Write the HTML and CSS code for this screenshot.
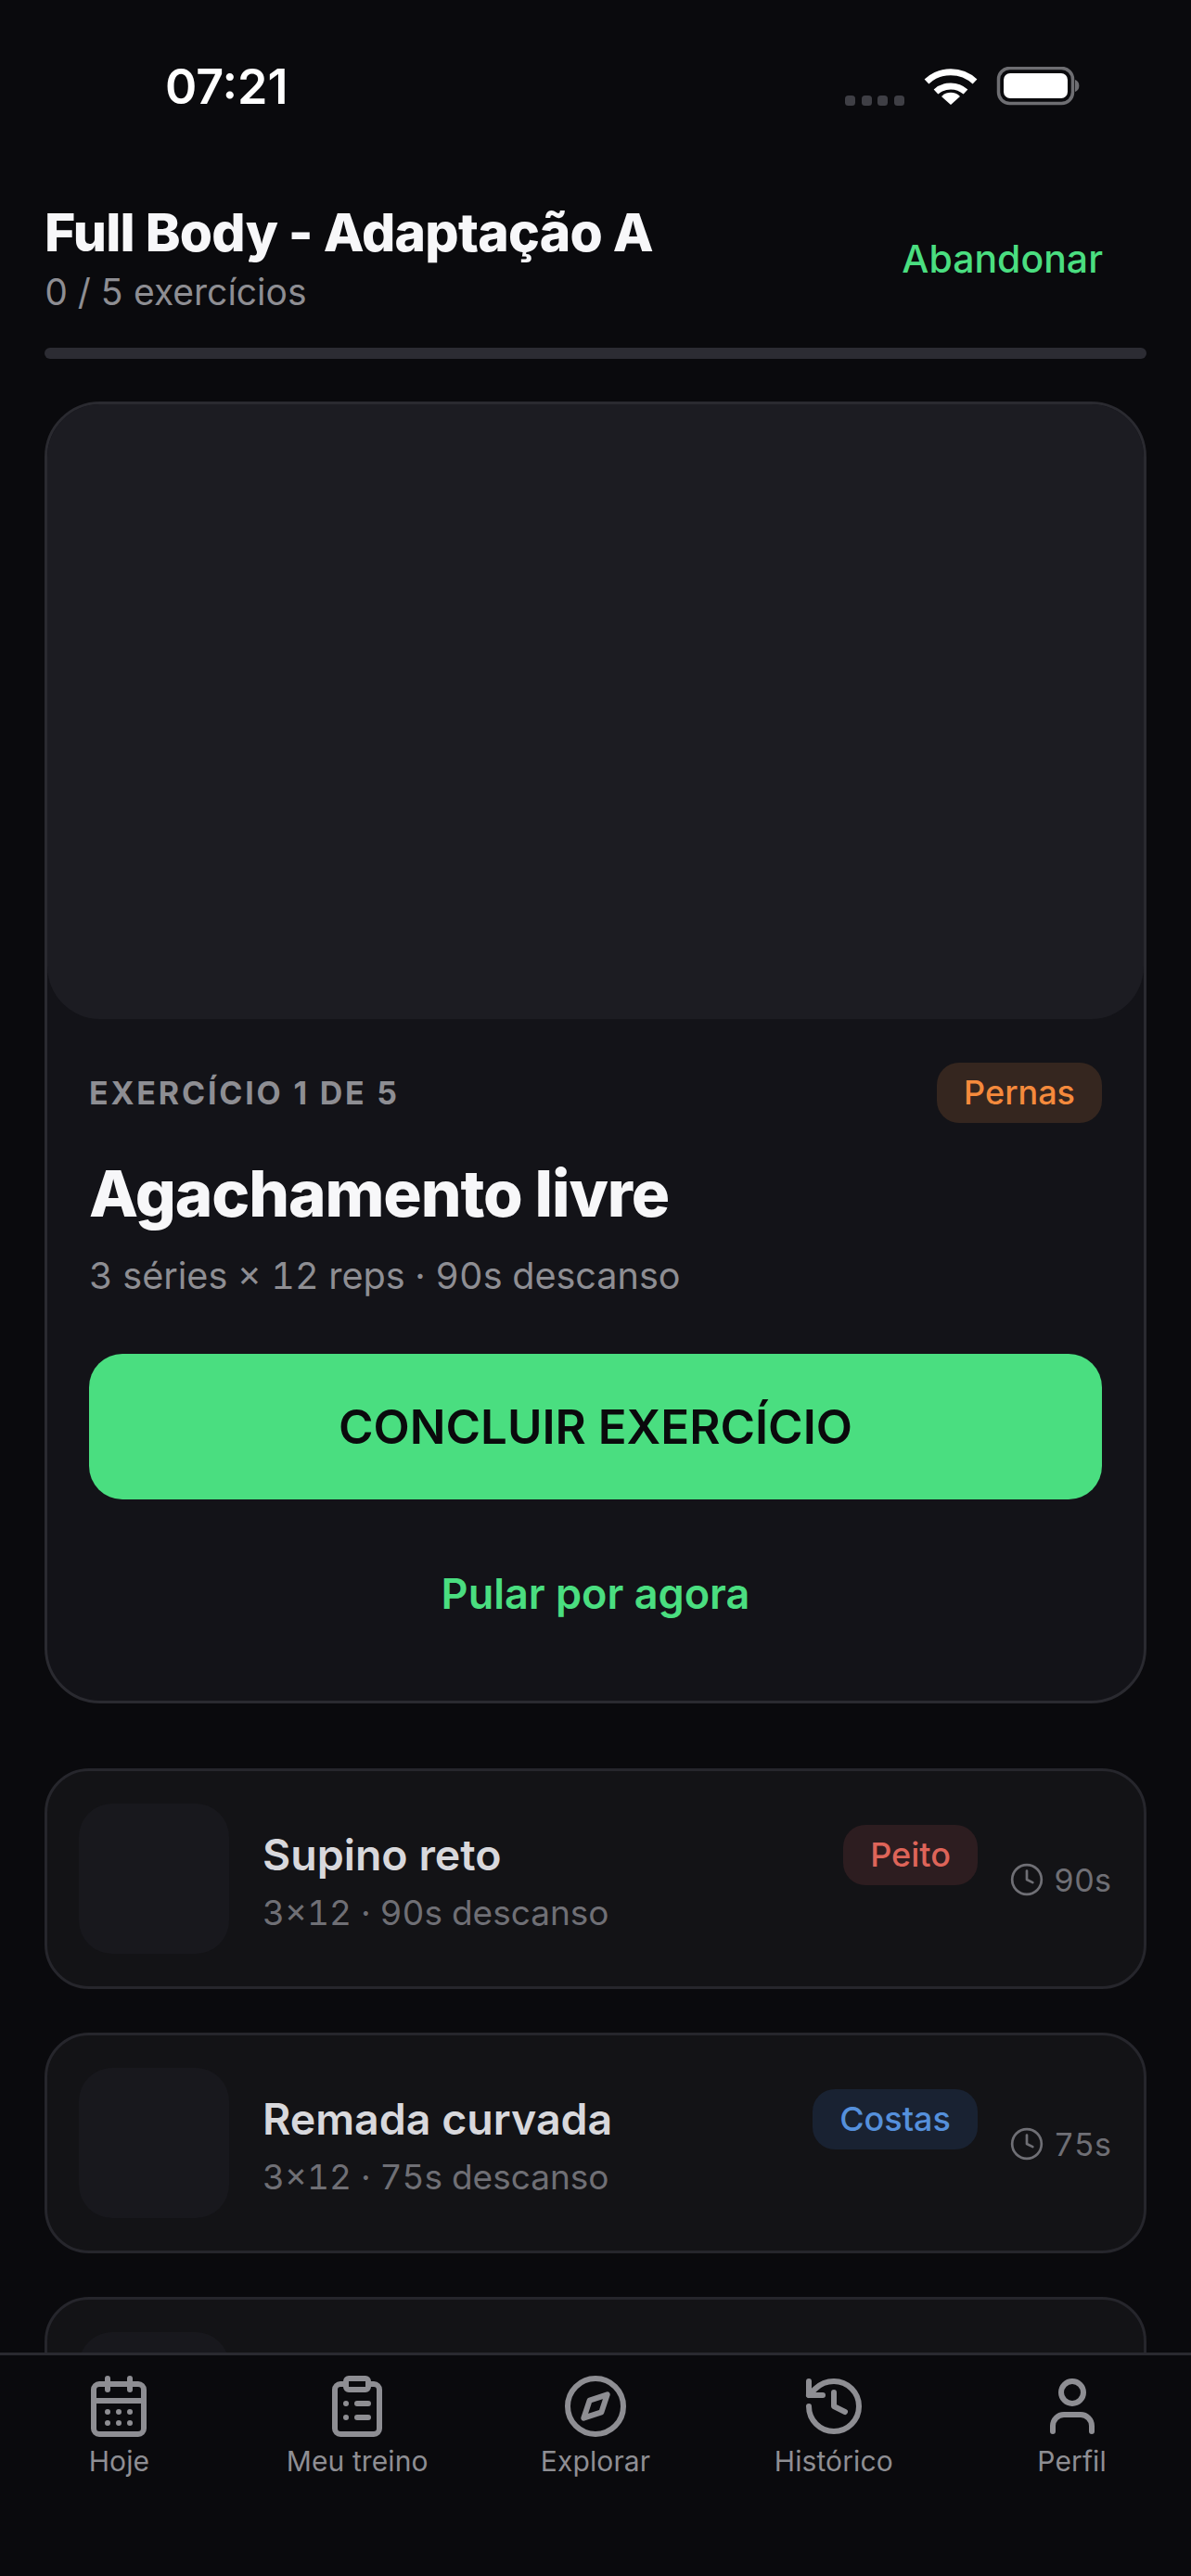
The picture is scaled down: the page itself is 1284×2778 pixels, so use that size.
FILE: index.html
```html
<!DOCTYPE html>
<html lang="pt-BR">
  <head>
    <meta charset="UTF-8" />
    <meta name="viewport" content="width=device-width, initial-scale=1.0" />
    <title>Full Body - Adaptação A</title>
    <link rel="stylesheet" href="styles.css">
  </head>
  <body>
    <div class="app">
      <div class="status-bar">
        <span class="status-time">07:21</span>
        <svg class="status-icons" width="255" height="42" viewBox="0 0 255 42">
          <g fill="#3f3f45">
            <rect x="0" y="31" width="11" height="11" rx="3.5" />
            <rect x="18" y="31" width="11" height="11" rx="3.5" />
            <rect x="35" y="31" width="11" height="11" rx="3.5" />
            <rect x="53" y="31" width="11" height="11" rx="3.5" />
          </g>
          <g fill="none" stroke="#fff" stroke-width="7">
            <path d="M88 16 A38 38 0 0 1 140 16" />
            <path d="M98 27 A24 24 0 0 1 130 27" />
          </g>
          <path d="M114 41 L104 32 A14 14 0 0 1 124 32 Z" fill="#fff" />
          <rect x="165.5" y="1.5" width="80" height="38" rx="12" fill="none" stroke="#6e6e72" stroke-width="3.5" />
          <rect x="171" y="7" width="69" height="27" rx="7" fill="#fff" />
          <path d="M248 14 a7 7 0 0 1 0 13 Z" fill="#6e6e72" />
        </svg>
      </div>

      <div class="workout-head">
        <div>
          <h1 class="workout-title">Full Body - Adaptação A</h1>
          <div class="workout-count">0 / 5 exercícios</div>
        </div>
        <a class="quit-link">Abandonar</a>
      </div>
      <div class="progress"></div>

      <div class="content">
        <section class="hero">
          <div class="hero-media"></div>
          <div class="hero-body">
            <div class="hero-top">
              <span class="hero-step">EXERCÍCIO 1 DE 5</span>
              <span class="chip chip-legs">Pernas</span>
            </div>
            <h2 class="hero-name">Agachamento livre</h2>
            <div class="hero-meta">3 séries × 12 reps · 90s descanso</div>
            <button class="btn-done" type="button">CONCLUIR EXERCÍCIO</button>
            <a class="skip-link">Pular por agora</a>
          </div>
        </section>

        <div class="row">
          <div class="thumb"></div>
          <div class="row-body">
            <div class="row-top">
              <span class="row-name">Supino reto</span>
              <span class="chip chip-chest">Peito</span>
            </div>
            <div class="row-meta">3×12 · 90s descanso</div>
          </div>
          <div class="row-time">
            <svg class="clock" viewBox="0 0 24 24"><circle cx="12" cy="12" r="10" /><polyline points="12 6 12 12 16 14" /></svg>
            90s
          </div>
        </div>

        <div class="row">
          <div class="thumb"></div>
          <div class="row-body">
            <div class="row-top">
              <span class="row-name">Remada curvada</span>
              <span class="chip chip-back">Costas</span>
            </div>
            <div class="row-meta">3×12 · 75s descanso</div>
          </div>
          <div class="row-time">
            <svg class="clock" viewBox="0 0 24 24"><circle cx="12" cy="12" r="10" /><polyline points="12 6 12 12 16 14" /></svg>
            75s
          </div>
        </div>

        <div class="row">
          <div class="thumb"></div>
        </div>
      </div>

      <nav class="tabbar">
        <a class="tab">
          <svg class="tab-icon" viewBox="0 0 24 24"><path d="M8 2v4" /><path d="M16 2v4" /><rect width="18" height="18" x="3" y="4" rx="2" /><path d="M3 10h18" /><path d="M8 14h.01" /><path d="M12 14h.01" /><path d="M16 14h.01" /><path d="M8 18h.01" /><path d="M12 18h.01" /><path d="M16 18h.01" /></svg>
          Hoje
        </a>
        <a class="tab">
          <svg class="tab-icon" viewBox="0 0 24 24"><rect width="8" height="4" x="8" y="2" rx="1" ry="1" /><path d="M16 4h2a2 2 0 0 1 2 2v14a2 2 0 0 1-2 2H6a2 2 0 0 1-2-2V6a2 2 0 0 1 2-2h2" /><path d="M12 11h4" /><path d="M12 16h4" /><path d="M8 11h.01" /><path d="M8 16h.01" /></svg>
          Meu treino
        </a>
        <a class="tab">
          <svg class="tab-icon" viewBox="0 0 24 24"><circle cx="12" cy="12" r="10" /><polygon points="16.24 7.76 14.12 14.12 7.76 16.24 9.88 9.88 16.24 7.76" /></svg>
          Explorar
        </a>
        <a class="tab">
          <svg class="tab-icon" viewBox="0 0 24 24"><path d="M3 12a9 9 0 1 0 9-9 9.75 9.75 0 0 0-6.74 2.74L3 8" /><path d="M3 3v5h5" /><path d="M12 7v5l4 2" /></svg>
          Histórico
        </a>
        <a class="tab">
          <svg class="tab-icon" viewBox="0 0 24 24"><path d="M19 21v-2a4 4 0 0 0-4-4H9a4 4 0 0 0-4 4v2" /><circle cx="12" cy="7" r="4" /></svg>
          Perfil
        </a>
      </nav>
    </div>
  </body>
</html>
```

FILE: styles.css
```css
*, *:before, *:after {
  box-sizing: border-box;
}
html, body {
  margin: 0;
  padding: 0;
}
body {
  background-color: #0a0a0d;
  font-family: "Inter", "Noto Sans", sans-serif;
  color: #f7f7f9;
}
.app {
  display: flex;
  flex-direction: column;
  width: 1284px;
  height: 2778px;
  overflow: hidden;
}

.status-bar {
  display: flex;
  justify-content: space-between;
  align-items: flex-start;
  height: 192px;
  padding: 0 118px 0 178px;
}
.status-time {
  margin-top: 63px;
  font-size: 52px;
  line-height: 62px;
  font-weight: 600;
  color: #fff;
}
.status-icons {
  margin-top: 72px;
}

.workout-head {
  display: flex;
  justify-content: space-between;
  align-items: center;
  padding: 26px 48px 0;
}
.workout-title {
  margin: 0;
  font-size: 57px;
  line-height: 66px;
  font-weight: 800;
  letter-spacing: -0.75px;
}
.workout-count {
  margin-top: 7px;
  font-size: 39px;
  line-height: 48px;
  font-variant-numeric: tabular-nums;
  color: #8e8e93;
}
.quit-link {
  padding-right: 47px;
  font-size: 41px;
  font-weight: 500;
  color: #4ade80;
}
.progress {
  height: 12px;
  margin: 36px 48px 0;
  border-radius: 6px;
  background-color: #2c2c33;
}

.content {
  flex: 1;
  min-height: 0;
  overflow: hidden;
  padding: 46px 48px 0;
}
.hero {
  border: 3px solid #2a2a30;
  border-radius: 60px;
  background-color: #131318;
  height: 1404px;
  overflow: hidden;
}
.hero-media {
  height: 663px;
  border-radius: 0 0 57px 57px;
  background-color: #1c1c22;
}
.hero-body {
  display: flex;
  flex-direction: column;
  padding: 47px 45px 0;
}
.hero-top {
  display: flex;
  justify-content: space-between;
  align-items: center;
}
.hero-step {
  font-size: 34px;
  font-weight: 700;
  letter-spacing: 2.8px;
  color: #8e8e93;
}
.hero-name {
  margin: 37px 0 0;
  font-size: 69px;
  line-height: 78px;
  font-weight: 800;
  letter-spacing: -1.1px;
}
.hero-meta {
  margin-top: 26px;
  font-size: 39.6px;
  line-height: 48px;
  font-variant-numeric: tabular-nums;
  color: #8e8e93;
}
.btn-done {
  height: 157px;
  margin-top: 60px;
  border: 0;
  border-radius: 36px;
  background-color: #4ade80;
  font-family: inherit;
  font-size: 51px;
  font-weight: 600;
  color: #0a0a0c;
}
.skip-link {
  margin-top: 75px;
  text-align: center;
  font-size: 45px;
  line-height: 54px;
  font-weight: 600;
  color: #4ade80;
}

.chip {
  display: inline-block;
  height: 65px;
  padding: 0 29px;
  border-radius: 24px;
  font-size: 36px;
  line-height: 65px;
  font-weight: 500;
}
.chip-legs {
  background-color: #35261f;
  color: #f58a3c;
}
.chip-chest {
  background-color: #2d1d20;
  color: #de6459;
}
.chip-back {
  background-color: #192232;
  color: #5590dc;
}

.row {
  display: flex;
  align-items: center;
  gap: 36px;
  height: 238px;
  margin-top: 47px;
  padding: 36px 35px 36px 34px;
  border: 3px solid #26262c;
  border-radius: 48px;
  background-color: #131316;
}
.hero + .row {
  margin-top: 70px;
}
.thumb {
  flex: none;
  width: 162px;
  height: 162px;
  border-radius: 36px;
  background-color: #18181d;
}
.row-body {
  flex: 1;
  min-width: 0;
  padding-top: 2px;
}
.row-top {
  display: flex;
  justify-content: space-between;
  align-items: center;
}
.row-name {
  font-size: 46.5px;
  font-weight: 600;
  color: #d8d8dc;
}
.row-meta {
  margin-top: 5px;
  font-size: 37px;
  line-height: 49px;
  font-variant-numeric: tabular-nums;
  color: #6f6f75;
}
.row-time {
  display: flex;
  align-items: center;
  gap: 10px;
  margin-left: -2px;
  padding-top: 2px;
  font-size: 34px;
  font-variant-numeric: tabular-nums;
  color: #6f6f75;
}
.clock {
  width: 38px;
  height: 38px;
  fill: none;
  stroke: #6f6f75;
  stroke-width: 1.7;
  stroke-linecap: round;
  stroke-linejoin: round;
}

.tabbar {
  display: flex;
  flex: none;
  height: 241px;
  border-top: 3px solid #2a2a30;
  background-color: #0a0a0d;
  padding-top: 19px;
}
.tab {
  display: flex;
  flex: 1;
  flex-direction: column;
  align-items: center;
  font-size: 30px;
  line-height: 38px;
  letter-spacing: 0.1px;
  color: #8e8e93;
}
.tab-icon {
  width: 72px;
  height: 72px;
  margin-bottom: 4px;
  fill: none;
  stroke: #8e8e93;
  stroke-width: 2;
  stroke-linecap: round;
  stroke-linejoin: round;
}
```
